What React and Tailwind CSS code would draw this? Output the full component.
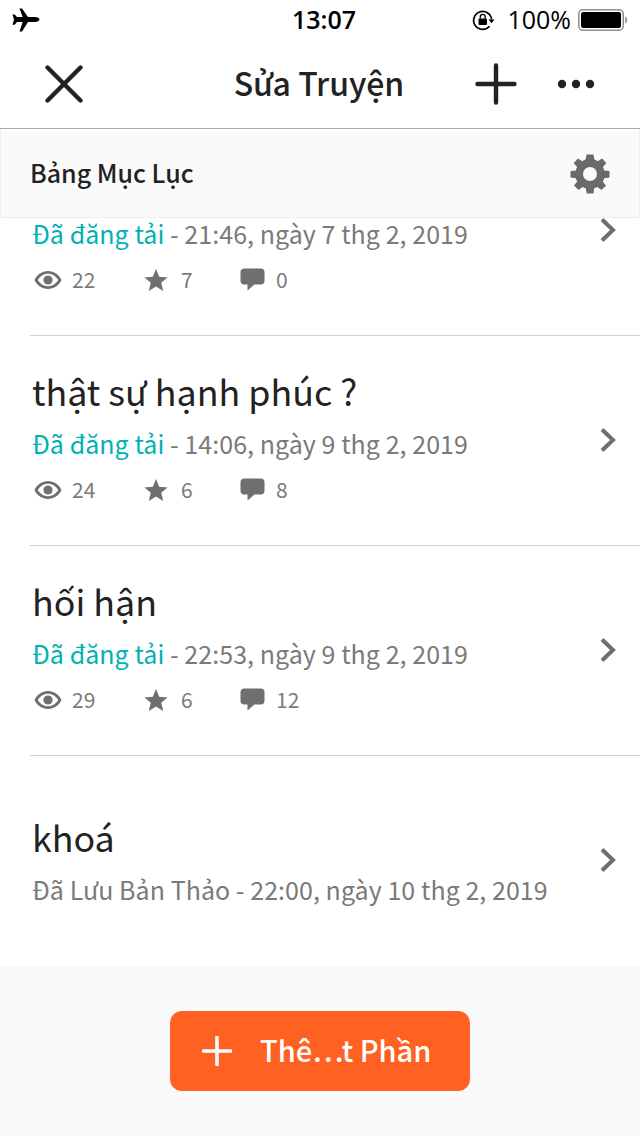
const FONT = "font-['Noto_Sans_CJK_SC','Noto_Sans',sans-serif]";

function Plane() {
  return (
    <svg width="28" height="24" viewBox="0 0 28 24" fill="#000">
      <path d="M7.5 0.5 H10 L16 9 H23 C25.5 9 27.5 10.4 27.5 11.5 C27.5 12.6 25.5 14 23 14 H16 L10 23.5 H7.5 L10.7 14 H5 L2.6 16.7 H0.5 L2 11.5 L0.5 6.5 H2.6 L5 9 H10.7 Z" />
    </svg>
  );
}

function RotationLock() {
  return (
    <svg width="24" height="24" viewBox="0 0 24 24" fill="none">
      <path d="M20.6 11.5 A9 9 0 1 0 18.5 18.2" stroke="#000" strokeWidth="1.7" />
      <path d="M17.5 11.5 H23.5 L20.5 15.2 Z" fill="#000" />
      <rect x="7.5" y="10.5" width="8.5" height="6.5" rx="1" fill="#000" />
      <path d="M9.3 10.5 V8.8 A2.4 2.4 0 0 1 14.2 8.8 V10.5" stroke="#000" strokeWidth="1.4" />
    </svg>
  );
}

function Battery() {
  return (
    <svg width="50" height="22" viewBox="0 0 50 22">
      <rect x="0.75" y="0.75" width="44.5" height="20.5" rx="4" fill="none" stroke="#8e8e8e" strokeWidth="1.5" />
      <rect x="3" y="3" width="40" height="16" rx="2.2" fill="#000" />
      <path d="M47 7.5 C48.5 8 49.3 9.3 49.3 11 C49.3 12.7 48.5 14 47 14.5 Z" fill="#a0a0a0" />
    </svg>
  );
}

function Eye() {
  return (
    <svg width="28" height="20" viewBox="0 0 28 20">
      <path fillRule="evenodd" fill="#6f6f6f" d="M14 1 C20 1 25 4.6 27.5 10 C25 15.4 20 19 14 19 C8 19 3 15.4 0.5 10 C3 4.6 8 1 14 1 Z M14 3.8 C9.6 3.8 6 6.4 3.7 10 C6 13.6 9.6 16.2 14 16.2 C18.4 16.2 22 13.6 24.3 10 C22 6.4 18.4 3.8 14 3.8 Z" />
      <circle cx="14" cy="10" r="4.6" fill="#6f6f6f" />
    </svg>
  );
}

function Star() {
  return (
    <svg width="24" height="24" viewBox="0 0 24 24" fill="#6f6f6f">
      <path d="M12 1 L15.2 8.8 L23.6 9.4 L17.2 14.8 L19.2 23 L12 18.6 L4.8 23 L6.8 14.8 L0.4 9.4 L8.8 8.8 Z" />
    </svg>
  );
}

function Bubble() {
  return (
    <svg width="25" height="23" viewBox="0 0 25 23" fill="#6f6f6f">
      <path d="M4 0.5 H21 C23 0.5 24.5 2 24.5 4 V13 C24.5 15 23 16.5 21 16.5 H14.5 L7.5 22.5 V16.5 H4 C2 16.5 0.5 15 0.5 13 V4 C0.5 2 2 0.5 4 0.5 Z" />
    </svg>
  );
}

function Chevron() {
  return (
    <svg width="16" height="26" viewBox="0 0 16 26" fill="none">
      <path d="M2 2.5 L13 13 L2 23.5" stroke="#6f6f6f" strokeWidth="4" />
    </svg>
  );
}

function Gear() {
  return (
    <svg width="40" height="40" viewBox="0 0 40 40" fill="#6a6a6a">
      <path fillRule="evenodd" d="M16.6 0.5 H23.4 L24.4 5.6 C25.6 6 26.7 6.5 27.7 7.2 L32.2 4.4 L36.3 9.2 L32.9 13 C33.5 14 33.9 15.2 34.1 16.4 L39.5 17 V23.4 L34.2 24.2 C33.9 25.4 33.4 26.6 32.8 27.6 L36 31.8 L31.4 36 L27.4 32.9 C26.4 33.5 25.4 34 24.2 34.3 L23.4 39.5 H16.6 L15.8 34.3 C14.6 34 13.5 33.5 12.5 32.9 L8.5 36 L4 31.6 L7.2 27.6 C6.6 26.6 6.1 25.4 5.8 24.2 L0.5 23.4 V17 L5.9 16.4 C6.1 15.2 6.5 14 7.1 13 L3.7 9.2 L7.8 4.4 L12.3 7.2 C13.3 6.5 14.4 6 15.6 5.6 Z M20 13 A7 7 0 1 0 20 27 A7 7 0 1 0 20 13 Z" />
    </svg>
  );
}

function Stat({ icon, value, w }) {
  return (
    <div className={`flex items-center ${w}`}>
      {icon}
      <span className="text-[21px] leading-none text-[#7a7a7a]">{value}</span>
    </div>
  );
}

function Row({ title, status, published, views, stars, comments, last }) {
  return (
    <div className={`relative h-[210px] ml-[30px] ${last ? "" : "border-b border-[#d0d0d0]"}`}>
      <div className={`pl-[2px] pr-[24px] h-full flex items-center ${last ? "pb-[5px]" : "pb-[8px]"}`}>
        <div className="flex-1 flex flex-col">
          <div className="text-[35.8px] leading-[48px] h-[48px] text-[#222222]">{title}</div>
          <div className="text-[25px] leading-[32px] mt-[13px] text-[#7a7a7a] whitespace-nowrap tracking-[0.05px]">
            {published ? <span className="text-[#00b2b2]">Đã đăng tải</span> : <span>Đã Lưu Bản Thảo</span>}
            <span>{" - "}{status}</span>
          </div>
          {published && (
            <div className="flex items-center mt-[13px] h-[36px] pl-[2px]">
              <Stat w="w-[110px] gap-[10px]" icon={<Eye />} value={views} />
              <Stat w="w-[96px] gap-[13px]" icon={<Star />} value={stars} />
              <Stat w="w-auto gap-[11px]" icon={<Bubble />} value={comments} />
            </div>
          )}
        </div>
        <div className={`shrink-0 ${last ? "mt-[5px]" : "mt-[8px]"} -translate-y-[1px]`}><Chevron /></div>
      </div>
    </div>
  );
}

export default function App() {
  return (
    <div className={`w-[640px] h-[1136px] bg-white flex flex-col overflow-hidden ${FONT}`}>
      <div className="h-[40px] shrink-0 flex items-center justify-between pl-[12px] pr-[12px] font-['Open_Sans',sans-serif]">
        <Plane />
        <div className="absolute left-0 w-[648px] text-center text-[25px] text-black font-semibold">13:07</div>
        <div className="flex items-center gap-[12px]">
          <RotationLock />
          <div className="flex items-center gap-[7px]">
            <span className="text-[25px] text-black">100%</span>
            <Battery />
          </div>
        </div>
      </div>
      <div className="h-[88px] shrink-0 flex items-center relative">
        <div className="pl-[45px]">
          <svg width="38" height="38" viewBox="0 0 38 38" fill="none" className="mt-[-1px]">
            <path d="M2.5 2.5 L35.5 35.5 M35.5 2.5 L2.5 35.5" stroke="#222" strokeWidth="4.4" strokeLinecap="round" />
          </svg>
        </div>
        <div className="absolute inset-x-0 text-center text-[32px] font-medium text-[#222222] -top-[2px] leading-[88px] pr-[2px]">Sửa Truyện</div>
        <div className="ml-auto flex items-center gap-[40px] pr-[45px]">
          <svg width="42" height="42" viewBox="0 0 42 42" fill="none">
            <path d="M21 2.5 V39.5 M2.5 21 H39.5" stroke="#222" strokeWidth="4.4" strokeLinecap="round" />
          </svg>
          <svg width="38" height="10" viewBox="0 0 38 10" fill="#222">
            <circle cx="5" cy="5" r="4.2" />
            <circle cx="19" cy="5" r="4.2" />
            <circle cx="33" cy="5" r="4.2" />
          </svg>
        </div>
      </div>
      <div className="h-[1px] shrink-0 bg-[#a9a9a9]" />
      <div className="relative h-[89px] shrink-0 bg-[#fafafa] border border-[#efefef] border-t-[2px] border-t-white flex items-center justify-between pl-[29px] pr-[29px] pb-[3px] z-10">
        <span className="text-[25px] font-medium text-[#222222]">Bảng Mục Lục</span>
        <div className="mt-[3px]"><Gear /></div>
      </div>
      <div className="flex-1 min-h-0 overflow-hidden -mt-[89px]">
        <div className="-mt-[3px]">
          <Row title="" published status="21:46, ngày 7 thg 2, 2019" views="22" stars="7" comments="0" />
          <Row title="thật sự hạnh phúc ?" published status="14:06, ngày 9 thg 2, 2019" views="24" stars="6" comments="8" />
          <Row title="hối hận" published status="22:53, ngày 9 thg 2, 2019" views="29" stars="6" comments="12" />
          <Row last title="khoá" status="22:00, ngày 10 thg 2, 2019" />
        </div>
      </div>
      <div className="h-[170px] shrink-0 bg-[#fafafa] flex items-center justify-center">
        <div className="w-[300px] h-[80px] rounded-[12px] bg-[#ff6122] flex items-center pl-[32px] text-white">
          <svg width="30" height="30" viewBox="0 0 30 30" fill="none">
            <path d="M15 1.5 V28.5 M1.5 15 H28.5" stroke="#fff" strokeWidth="3.6" strokeLinecap="round" />
          </svg>
          <span className="ml-[28px] text-[29px] font-medium -mt-[2px]">Thê…t Phần</span>
        </div>
      </div>
    </div>
  );
}
